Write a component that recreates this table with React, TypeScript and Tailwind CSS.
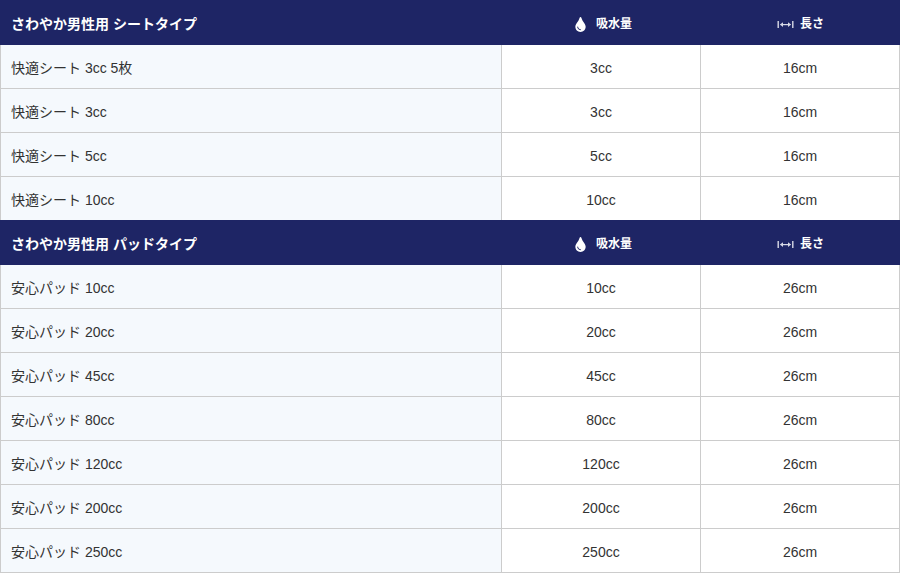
import { FaTint } from "react-icons/fa";

const FONT = { fontFamily: '"Liberation Sans", Arial, "Noto Sans CJK JP", sans-serif' };

type Item = { name: string; absorb: string; length: string };

const SHEETS: Item[] = [
  { name: "快適シート 3cc 5枚", absorb: "3cc", length: "16cm" },
  { name: "快適シート 3cc", absorb: "3cc", length: "16cm" },
  { name: "快適シート 5cc", absorb: "5cc", length: "16cm" },
  { name: "快適シート 10cc", absorb: "10cc", length: "16cm" },
];

const PADS: Item[] = [
  { name: "安心パッド 10cc", absorb: "10cc", length: "26cm" },
  { name: "安心パッド 20cc", absorb: "20cc", length: "26cm" },
  { name: "安心パッド 45cc", absorb: "45cc", length: "26cm" },
  { name: "安心パッド 80cc", absorb: "80cc", length: "26cm" },
  { name: "安心パッド 120cc", absorb: "120cc", length: "26cm" },
  { name: "安心パッド 200cc", absorb: "200cc", length: "26cm" },
  { name: "安心パッド 250cc", absorb: "250cc", length: "26cm" },
];

function WidthIcon() {
  return (
    <svg width="17" height="9" viewBox="0 0 17 9" className="text-[#d8dae6]" aria-hidden="true">
      <rect x="0.5" y="1" width="1.4" height="7" fill="currentColor" />
      <rect x="15.1" y="1" width="1.4" height="7" fill="currentColor" />
      <rect x="3.5" y="4" width="10" height="1.2" fill="currentColor" />
      <path d="M3 4.6 L6 2.2 L6 7 Z" fill="currentColor" />
      <path d="M14 4.6 L11 2.2 L11 7 Z" fill="currentColor" />
    </svg>
  );
}

function GroupHeader({ title }: { title: string }) {
  return (
    <div className="flex h-[45px] bg-[#1e2565] pt-[3px] text-white">
      <div className="flex w-[502px] items-center pl-[11px] text-[14px] font-bold">{title}</div>
      <div className="flex w-[199px] items-center justify-center gap-[10px] pl-[4px] text-[12px] font-bold">
        <FaTint className="h-[15px] w-[11px]" />
        <span>吸水量</span>
      </div>
      <div className="flex w-[199px] items-center justify-center gap-[6px] text-[12px] font-bold">
        <WidthIcon />
        <span>長さ</span>
      </div>
    </div>
  );
}

function Row({ item, last }: { item: Item; last?: boolean }) {
  const h = last ? "h-[43px]" : "h-[44px] border-b";
  return (
    <div className={`flex text-[14px] text-[#333] ${h}`}>
      <div className="flex w-[502px] items-center border-l border-r border-[#cccccc] bg-[#f5f9fd] pl-[10px] pt-[3px]">
        {item.name}
      </div>
      <div className="flex w-[199px] items-center justify-center border-r border-[#cccccc] bg-white pt-[3px]">
        {item.absorb}
      </div>
      <div className="flex w-[199px] items-center justify-center border-r border-[#cccccc] bg-white pt-[3px]">
        {item.length}
      </div>
    </div>
  );
}

export default function App() {
  return (
    <div className="w-[900px] bg-white" style={FONT}>
      <GroupHeader title="さわやか男性用 シートタイプ" />
      <div className="[&>div]:border-[#cccccc]">
        {SHEETS.map((s, i) => (
          <Row key={s.name} item={s} last={i === SHEETS.length - 1} />
        ))}
      </div>
      <GroupHeader title="さわやか男性用 パッドタイプ" />
      <div className="[&>div]:border-[#cccccc]">
        {PADS.map((p) => (
          <Row key={p.name} item={p} />
        ))}
      </div>
    </div>
  );
}
